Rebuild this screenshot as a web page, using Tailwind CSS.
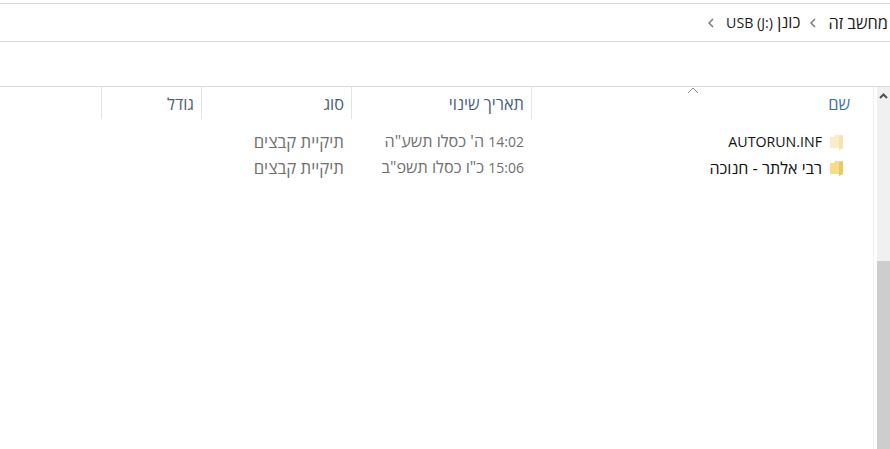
<!DOCTYPE html>
<html lang="he" dir="rtl">
<head>
  <meta charset="UTF-8" />
  <meta name="viewport" content="width=device-width, initial-scale=1.0"/>
  <title>USB (J:)</title>
  <script src="https://cdn.jsdelivr.net/npm/@tailwindcss/browser@4"></script>
</head>
<body class="bg-white overflow-hidden font-['Open_Sans','Liberation_Sans',sans-serif] text-[16.4px] leading-[20px]">
  <div class="w-[890px] h-[449px] flex flex-col overflow-hidden">
    <!-- address bar -->
    <div class="h-[3px] shrink-0"></div>
    <nav class="h-[39px] shrink-0 border-y border-[#d9d9d9] flex items-center pr-[2px] text-[#1a1a1a] overflow-hidden">
      <span class="whitespace-nowrap">מחשב זה</span>
      <svg class="w-[6px] h-[10px] mr-[12px] ml-[10px]" viewBox="0 0 6 10" fill="none" stroke="#7a7a7a" stroke-width="1.5"><path d="M5 1L1 5l4 4"/></svg>
      <span class="whitespace-nowrap">כונן <bdi dir="ltr" class="text-[14.2px]">USB (J:)</bdi></span>
      <svg class="w-[6px] h-[10px] mr-[12px]" viewBox="0 0 6 10" fill="none" stroke="#7a7a7a" stroke-width="1.5"><path d="M5 1L1 5l4 4"/></svg>
    </nav>
    <!-- toolbar -->
    <div class="h-[45px] shrink-0 border-b border-[#d9d9d9]"></div>
    <div class="flex-1 flex min-h-0">
      <!-- scrollbar -->
      <div class="w-[13px] shrink-0 bg-[#f0f0f0] flex flex-col">
        <div class="h-[174px] pt-[6px] flex justify-center">
          <svg class="w-[9px] h-[6px]" viewBox="0 0 9 6" fill="none" stroke="#505050" stroke-width="2"><path d="M1 5l3.5-3.5L8 5"/></svg>
        </div>
        <div class="flex-1 bg-[#cdcdcd]"></div>
      </div>
      <!-- list -->
      <main class="w-[877px] pr-[3px]">
        <div class="h-full border-r border-[#f0f0f0] flex flex-col">
          <div class="relative h-[32px] shrink-0 flex text-[#4c607a]">
            <svg class="absolute left-[687px] top-[0px] w-[12px] h-[7px]" viewBox="0 0 12 7" fill="none" stroke="#8a8a8a"><path d="M1 6l5-5 5 5"/></svg>
            <div class="w-[342px] pr-[23px] pt-[7px] border-l border-[#e5e5e5] text-[#3f6fa8]">שם</div>
            <div class="w-[180px] pr-[7px] pt-[7px] border-l border-[#e5e5e5]">תאריך שינוי</div>
            <div class="w-[150px] pr-[7px] pt-[7px] border-l border-[#e5e5e5]">סוג</div>
            <div class="w-[100px] pr-[7px] pt-[7px] border-l border-[#e5e5e5]">גודל</div>
          </div>
          <div class="pt-[9px] flex flex-col">
            <div class="flex h-[27px] items-center">
              <div class="w-[342px] pr-[30px] flex items-center gap-[8px] text-[#111]">
                <svg class="w-[13px] h-[16px] opacity-50 shrink-0" viewBox="0 0 13 16"><path d="M0 3h4l1-2h8l0 13H0z" fill="#f7dc8c"/><path d="M13 1l-4 2v13l4-2z" fill="#ecc862"/></svg>
                <span class="text-[14.2px]">AUTORUN.INF</span>
              </div>
              <div class="w-[180px] pr-[7px] text-[#707070] text-[16.2px] whitespace-nowrap"><span class="text-[14px]">14:02</span> ה' כסלו תשע"ה</div>
              <div class="w-[150px] pr-[7px] text-[#707070] text-[16.8px]">תיקיית קבצים</div>
            </div>
            <div class="flex h-[27px] items-center -mt-[1px]">
              <div class="w-[342px] pr-[30px] flex items-center gap-[8px] text-[#111]">
                <svg class="w-[13px] h-[16px] shrink-0" viewBox="0 0 13 16"><path d="M0 3h4l1-2h8l0 13H0z" fill="#f7dc8c"/><path d="M13 1l-4 2v13l4-2z" fill="#ecc862"/></svg>
                <span class="text-[16.1px]">רבי אלתר - חנוכה</span>
              </div>
              <div class="w-[180px] pr-[7px] text-[#707070] text-[16.2px] whitespace-nowrap"><span class="text-[14px]">15:06</span> כ"ו כסלו תשפ"ב</div>
              <div class="w-[150px] pr-[7px] text-[#707070] text-[16.8px]">תיקיית קבצים</div>
            </div>
          </div>
        </div>
      </main>
    </div>
  </div>
</body>
</html>
